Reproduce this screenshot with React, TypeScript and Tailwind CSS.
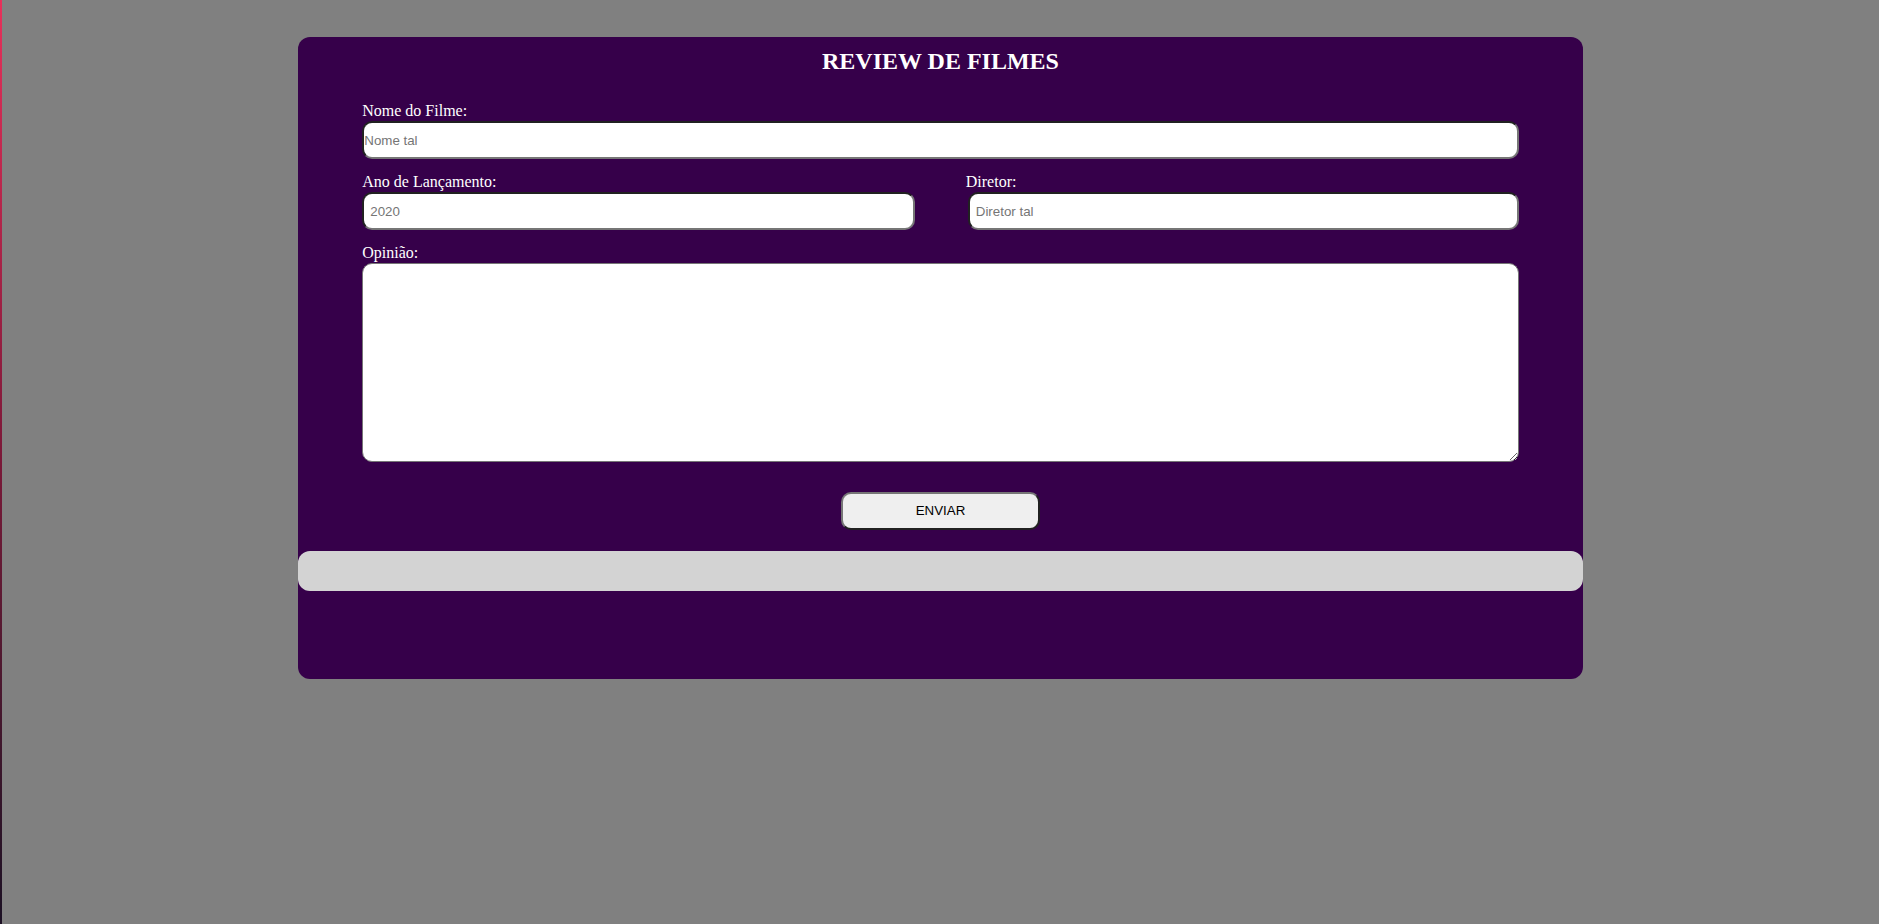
const serif = "font-['Liberation_Serif','Times_New_Roman',serif]"
const sans = "font-['Liberation_Sans',Arial,sans-serif]"

const inputBase =
  `block h-[38px] rounded-[10px] bg-white text-[13.33px] text-black outline-none ${sans} ` +
  '[border-width:2px] [border-style:inset] [border-color:#767676] placeholder:text-[#757575]'

function Field({ label, children }: { label: string; children: React.ReactNode }) {
  return (
    <div>
      <label className={`block text-[16px] leading-[20px] text-white ${serif}`}>{label}</label>
      {children}
    </div>
  )
}

export default function App() {
  return (
    <div className="flex min-h-screen bg-[#808080]">
      <div className="w-[2px] shrink-0 bg-linear-to-b from-[#e8305a] via-[#7a1838] to-[#1c1024]" />

      <div className="flex-1 pt-[37px]">
        <div className="mx-auto w-[1285px] rounded-[12px] bg-[#36004a] pt-[11px] pb-[88px]">
          <h2 className={`text-center text-[24px] leading-[27px] font-bold text-white ${serif}`}>
            REVIEW DE FILMES
          </h2>

          <form className="mx-auto mt-[26px] w-[90%]" onSubmit={(e) => e.preventDefault()}>
            <Field label="Nome do Filme:">
              <input className={`${inputBase} w-full px-0`} placeholder="Nome tal" />
            </Field>

            <div className="mt-[13px] flex justify-between">
              <div className="w-[553px]">
                <Field label="Ano de Lançamento:">
                  <input className={`${inputBase} w-full pl-[6px]`} placeholder="2020" />
                </Field>
              </div>
              <div className="w-[553px]">
                <Field label="Diretor:">
                  <input className={`${inputBase} ml-[2px] w-[551px] pl-[6px]`} placeholder="Diretor tal" />
                </Field>
              </div>
            </div>

            <div className="mt-[13px]">
              <Field label="Opinião:">
                <textarea
                  className={`block h-[199px] w-full rounded-[10px] border border-[#767676] bg-white p-[2px] text-[13.33px] outline-none ${sans}`}
                />
              </Field>
            </div>

            <div className="mt-[30px] flex justify-center">
              <button
                type="submit"
                className={`h-[38px] w-[199px] rounded-[10px] bg-[#efefef] text-[13.33px] text-black ${sans} [border-width:2px] [border-style:outset] [border-color:#767676]`}
              >
                ENVIAR
              </button>
            </div>
          </form>

          <div className="mt-[21px] h-[40px] rounded-[12px] bg-[#d3d3d3]" />
        </div>
      </div>
    </div>
  )
}
